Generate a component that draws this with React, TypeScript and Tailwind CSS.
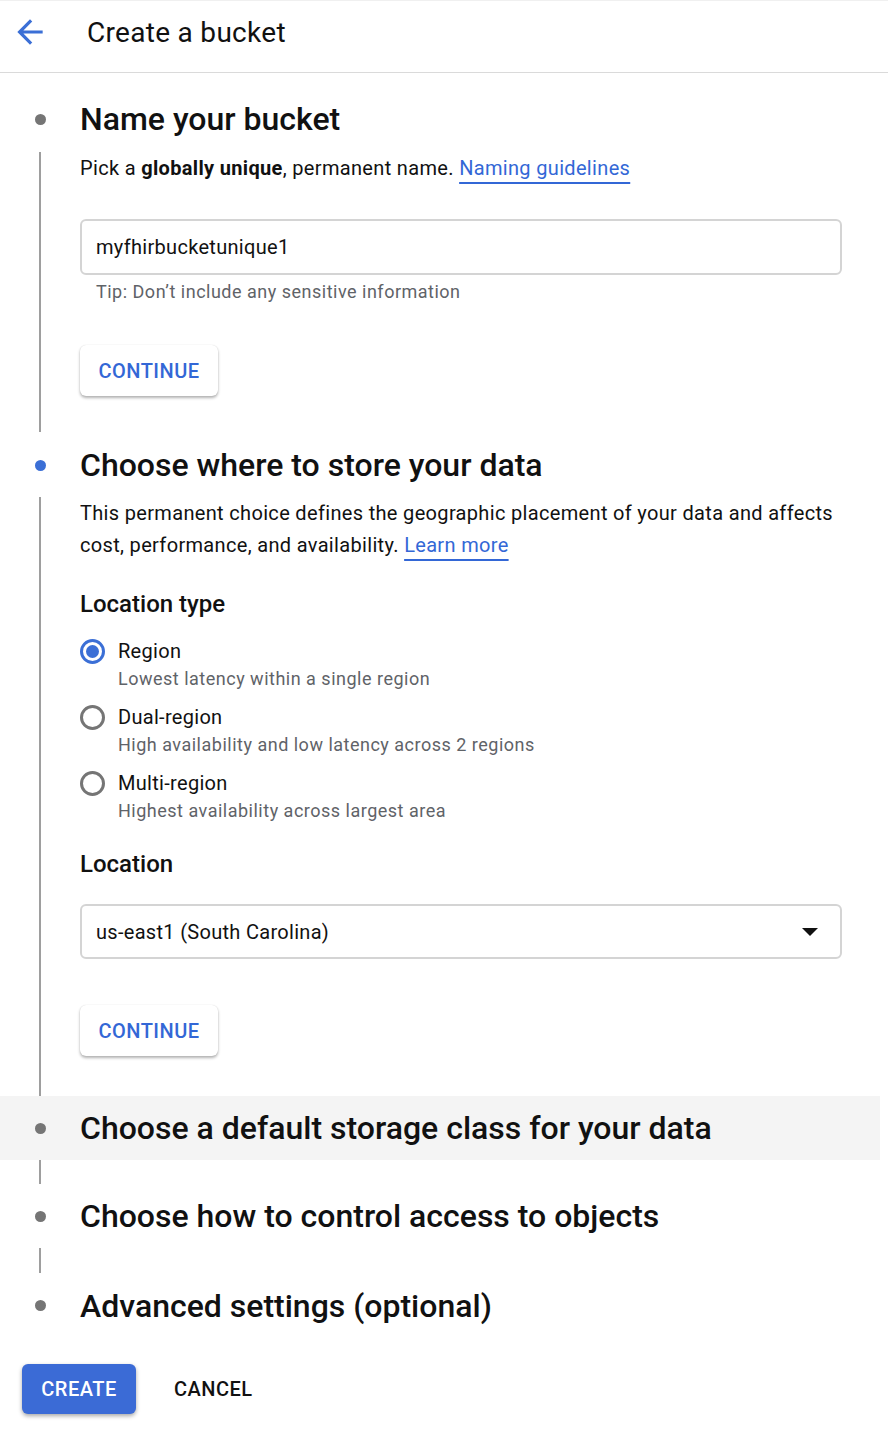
import React from "react";

function Dot({ active }: { active?: boolean }) {
  return (
    <div className="w-[80px] flex justify-center shrink-0">
      <div className={`w-[11px] h-[11px] rounded-full ${active ? "bg-[#3b6fd6]" : "bg-[#757575]"}`} />
    </div>
  );
}

function StepHead({ title, active, h, band }: { title: string; active?: boolean; h: string; band?: boolean }) {
  return (
    <div className={`flex items-center ${h} ${band ? "bg-[#f4f4f4] mr-[8px]" : ""}`}>
      <Dot active={active} />
      <h2 className="text-[32px] font-medium text-[#111] leading-none tracking-[0px]">{title}</h2>
    </div>
  );
}

function Line({ children, className = "" }: { children?: React.ReactNode; className?: string }) {
  return (
    <div className={`ml-[39px] border-l-2 border-[#9e9e9e] pl-[39px] ${className}`}>{children}</div>
  );
}

function ContinueBtn() {
  return (
    <button className="h-[51px] w-[138px] rounded-[6px] bg-white text-[#3367d6] text-[20px] font-medium tracking-[0.5px] shadow-[0_2px_3px_rgba(0,0,0,0.3),0_0_1px_rgba(0,0,0,0.15)]">
      CONTINUE
    </button>
  );
}

function Radio({ checked, label, desc }: { checked?: boolean; label: string; desc: string }) {
  return (
    <div className="flex">
      <div className="w-[38px] h-[28px] flex items-center shrink-0">
        <div
          className={`w-[25px] h-[25px] rounded-full border-[3px] flex items-center justify-center ${
            checked ? "border-[#3b6fd6]" : "border-[#757575]"
          }`}
        >
          {checked && <div className="w-[13px] h-[13px] rounded-full bg-[#3b6fd6]" />}
        </div>
      </div>
      <div>
        <div className="text-[20px] leading-[28px] text-[#111] tracking-[0.3px]">{label}</div>
        <div className="text-[18px] leading-[28px] text-[#5f6368] tracking-[0.5px]">{desc}</div>
      </div>
    </div>
  );
}

export default function App() {
  return (
    <div className="w-[888px] min-h-[1432px] bg-white font-['Roboto','Liberation_Sans',sans-serif] text-[#111]">
      <header className="relative h-[73px] border-t border-[#f0f0f0] border-b border-b-[#dadada] flex items-center">
        <svg
          className="absolute left-[11px] top-[12px]"
          width="38"
          height="38"
          viewBox="0 0 24 24"
          fill="#3b6fd6"
        >
          <path d="M20 11H7.83l5.59-5.59L12 4l-8 8 8 8 1.41-1.41L7.83 13H20v-2z" />
        </svg>
        <h1 className="ml-[87px] text-[28px] leading-none text-[#111] tracking-[0.3px] -mt-[8px]">Create a bucket</h1>
      </header>

      <div className="pt-[13px]">
        <StepHead title="Name your bucket" h="h-[66px]" />
        <Line className="pb-[36px]">
          <p className="text-[20px] leading-[32px] tracking-[0.33px]">
            Pick a <span className="font-bold">globally unique</span>, permanent name.{" "}
            <a className="text-[#3367d6] underline decoration-2 underline-offset-[7px]">Naming guidelines</a>
          </p>
          <div className="mt-[35px] h-[56px] w-[762px] rounded-[6px] border-2 border-[#d4d4d4] flex items-center px-[14px] text-[20px] tracking-[0.3px]">
            myfhirbucketunique1
          </div>
          <div className="mt-[5px] pl-[16px] text-[18px] leading-[24px] text-[#5f6368] tracking-[0.5px]">
            Tip: Don’t include any sensitive information
          </div>
          <div className="mt-[41px]">
            <ContinueBtn />
          </div>
        </Line>

        <StepHead title="Choose where to store your data" active h="h-[66px]" />
        <Line className="pb-[40px]">
          <p className="w-[770px] text-[20px] leading-[32px] tracking-[0.33px] -mt-[1px]">
            This permanent choice defines the geographic placement of your data and affects
            <br />
            cost, performance, and availability.{" "}
            <a className="text-[#3367d6] underline decoration-2 underline-offset-[7px]">Learn more</a>
          </p>
          <h3 className="mt-[27px] text-[24px] font-medium leading-[32px]">Location type</h3>
          <div className="mt-[17px] flex flex-col gap-[10px]">
            <Radio checked label="Region" desc="Lowest latency within a single region" />
            <Radio label="Dual-region" desc="High availability and low latency across 2 regions" />
            <Radio label="Multi-region" desc="Highest availability across largest area" />
          </div>
          <h3 className="mt-[23px] text-[24px] font-medium leading-[32px]">Location</h3>
          <div className="mt-[24px] h-[55px] w-[762px] rounded-[6px] border-2 border-[#d4d4d4] flex items-center justify-between pl-[14px] pr-[22px] text-[20px] tracking-[0.3px]">
            <span>us-east1 (South Carolina)</span>
            <svg width="16" height="8" viewBox="0 0 16 8">
              <path d="M0 0h16L8 8z" fill="#111" />
            </svg>
          </div>
          <div className="mt-[46px]">
            <ContinueBtn />
          </div>
        </Line>

        <StepHead title="Choose a default storage class for your data" h="h-[64px]" band />
        <Line className="h-[24px]" />
        <StepHead title="Choose how to control access to objects" h="h-[64px]" />
        <Line className="h-[25px]" />
        <StepHead title="Advanced settings (optional)" h="h-[65px]" />

        <div className="mt-[26px] ml-[22px] flex items-center gap-[18px]">
          <button className="h-[50px] w-[114px] rounded-[6px] bg-[#3b6bd6] text-white text-[20px] font-medium tracking-[0.5px] shadow-[0_2px_4px_rgba(0,0,0,0.35)]">
            CREATE
          </button>
          <button className="h-[50px] px-[20px] text-[20px] font-medium text-[#111] tracking-[0.5px]">CANCEL</button>
        </div>
      </div>
    </div>
  );
}
